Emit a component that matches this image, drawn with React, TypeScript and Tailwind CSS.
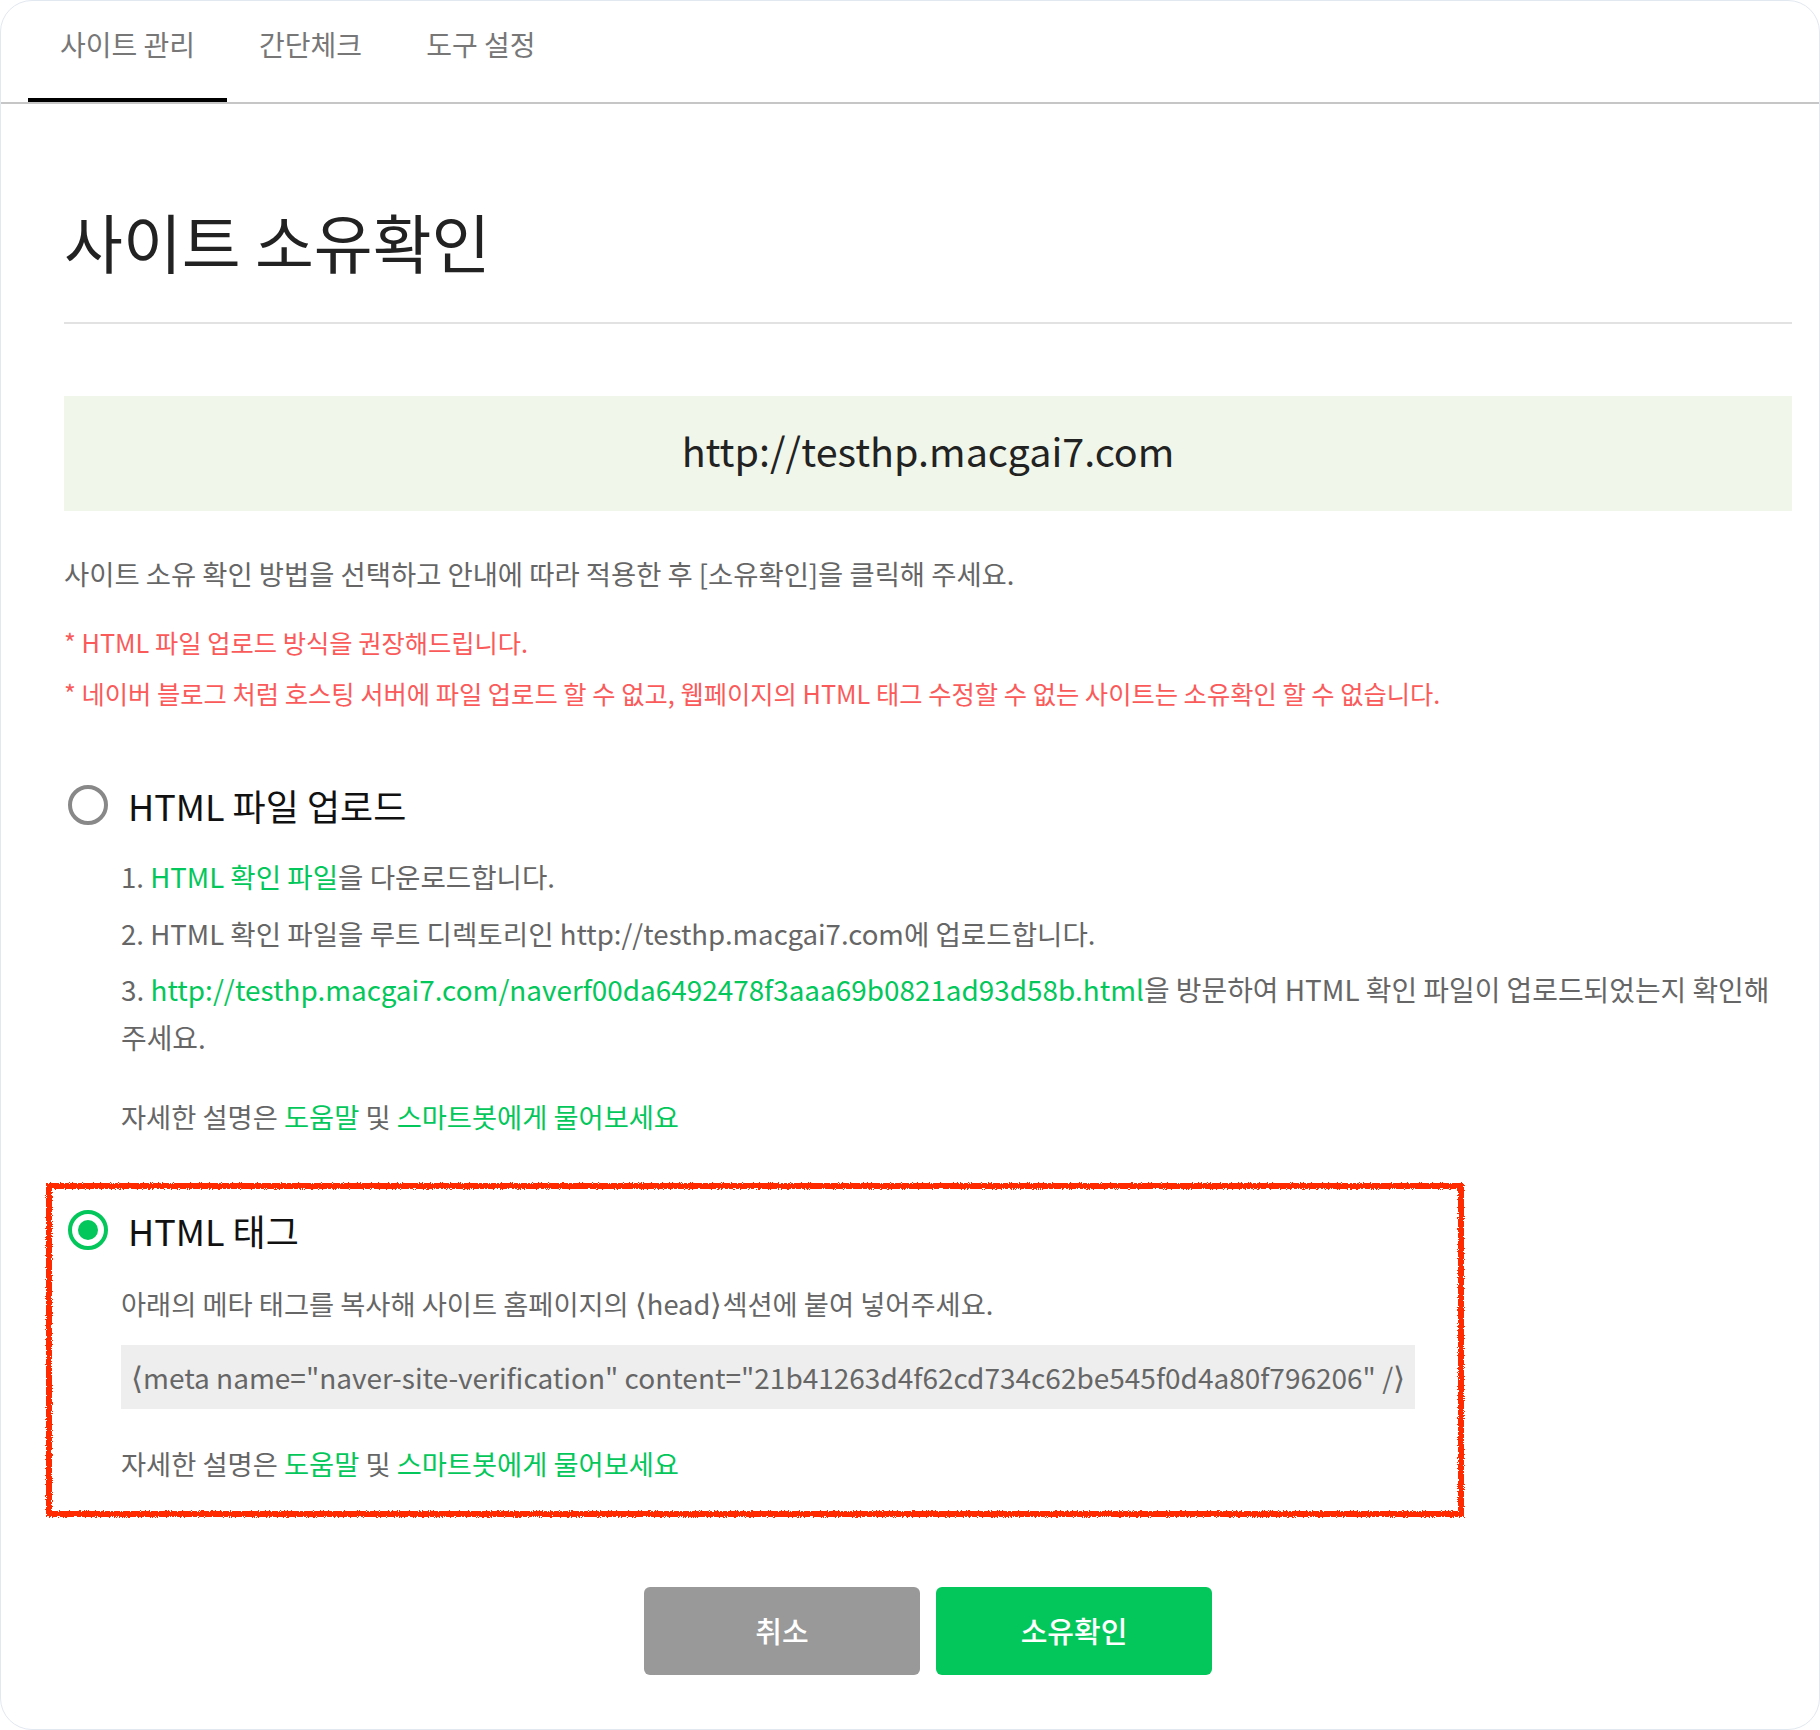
import React from 'react';

const FONT = { fontFamily: '"Noto Sans CJK KR", "Noto Sans", sans-serif' };

const tabs = ['사이트 관리', '간단체크', '도구 설정'];

// narrow angle brackets, as the original font draws < and >
const Open = () => <span className="font-['DejaVu_Sans'] font-light leading-none text-[1.1em]">⟨</span>;
const Close = () => <span className="font-['DejaVu_Sans'] font-light leading-none text-[1.1em]">⟩</span>;

const HelpLine: React.FC = () => (
  <p className="text-[27.3px] leading-[48px] text-[#666]">
    자세한 설명은 <span className="text-[#03c75a]">도움말</span> 및{' '}
    <span className="text-[#03c75a]">스마트봇에게 물어보세요</span>
  </p>
);

const App: React.FC = () => {
  return (
    <div style={FONT} className="w-[1820px] h-[1730px] bg-white">
      <svg width="0" height="0" className="absolute">
        <filter id="rough">
          <feTurbulence type="fractalNoise" baseFrequency="0.9" numOctaves="2" seed="3" />
          <feDisplacementMap in="SourceGraphic" scale="4" />
        </filter>
      </svg>
      <div className="h-full border border-[#e2e8f0] rounded-[32px] overflow-hidden flex flex-col">
        {/* tabs */}
        <div className="flex pl-[27px] h-[103px] border-b-2 border-[#c6c6c6]">
          {tabs.map((t, i) => (
            <div
              key={t}
              className={`h-[101px] px-8 pt-[25px] text-[28px] leading-[36px] text-[#777] ${
                i === 0 ? 'border-b-4 border-black' : ''
              }`}
            >
              {t}
            </div>
          ))}
        </div>

        <div className="pl-[63px] pr-[27px]">
          {/* title */}
          <div className="pt-[100px] pb-[46px] border-b-2 border-[#e2e2e2]">
            <h1 className="text-[64px] leading-[72px] text-[#222] font-normal">사이트 소유확인</h1>
          </div>

          {/* url box */}
          <div className="mt-[72px] h-[115px] pb-[7px] bg-[#f0f6e9] flex items-center justify-center">
            <span className="text-[39.5px] leading-[50px] text-[#222]">http://testhp.macgai7.com</span>
          </div>

          <p className="mt-[42px] text-[27.4px] leading-[40px] text-[#666]">
            사이트 소유 확인 방법을 선택하고 안내에 따라 적용한 후 [소유확인]을 클릭해 주세요.
          </p>
          <p className="mt-[29px] text-[25.3px] leading-[40px] text-[#fa5a5a]">
            * HTML 파일 업로드 방식을 권장해드립니다.
          </p>
          <p className="mt-[11px] text-[25.3px] leading-[40px] text-[#fa5a5a]">
            * 네이버 블로그 처럼 호스팅 서버에 파일 업로드 할 수 없고, 웹페이지의 HTML 태그 수정할 수 없는 사이트는 소유확인 할 수 없습니다.
          </p>

          {/* option 1 */}
          <div className="mt-[72px] flex items-center h-10">
            <span className="ml-[4px] w-10 h-10 rounded-full border-4 border-[#888]" />
            <span className="ml-5 text-[36px] leading-10 text-[#111]">HTML 파일 업로드</span>
          </div>
          <div className="pl-[57px] mt-[27px] text-[27.6px] leading-[48px] text-[#666]">
            <p>
              1. <span className="text-[#03c75a]">HTML 확인 파일</span>을 다운로드합니다.
            </p>
            <p className="mt-[9px]">2. HTML 확인 파일을 루트 디렉토리인 http://testhp.macgai7.com에 업로드합니다.</p>
            <p className="mt-[8px] text-[27.9px]">
              3.{' '}
              <span className="text-[#03c75a]">
                http://testhp.macgai7.com/naverf00da6492478f3aaa69b0821ad93d58b.html
              </span>
              을 방문하여 HTML 확인 파일이 업로드되었는지 확인해
              <br />
              주세요.
            </p>
            <div className="mt-[31px]">
              <HelpLine />
            </div>
          </div>

          {/* option 2 */}
          <div className="relative mt-[70px]">
            <div className="absolute left-[-18px] top-[-27px] w-[1418px] h-[334px] border-[6px] border-[#ff2a00] pointer-events-none [filter:url(#rough)]" />
            <div className="flex items-center h-10">
              <span className="ml-[4px] w-10 h-10 rounded-full border-4 border-[#03c75a] flex items-center justify-center">
                <span className="w-5 h-5 rounded-full bg-[#03c75a]" />
              </span>
              <span className="ml-5 text-[36px] leading-10 text-[#111]">HTML 태그</span>
            </div>
            <div className="pl-[57px] mt-[29px]">
              <p className="text-[27.3px] leading-[48px] text-[#666]">
                아래의 메타 태그를 복사해 사이트 홈페이지의 <Open />head<Close />섹션에 붙여 넣어주세요.
              </p>
              <div className="mt-[18px] inline-block whitespace-nowrap bg-[#eeeeee] px-[10px] py-[12px] text-[28px] leading-[40px] text-[#666]">
                <Open />
                meta name="naver-site-verification" content="21b41263d4f62cd734c62be545f0d4a80f796206" /
                <Close />
              </div>
              <div className="mt-[30px]">
                <HelpLine />
              </div>
            </div>
          </div>

          {/* buttons */}
          <div className="mt-[100px] flex justify-center gap-4">
            <button className="w-[276px] h-[88px] rounded-md bg-[#999999] text-white text-[29px] font-medium">
              취소
            </button>
            <button className="w-[276px] h-[88px] rounded-md bg-[#03c75a] text-white text-[29px] font-medium">
              소유확인
            </button>
          </div>
        </div>
      </div>
    </div>
  );
};

export default App;
